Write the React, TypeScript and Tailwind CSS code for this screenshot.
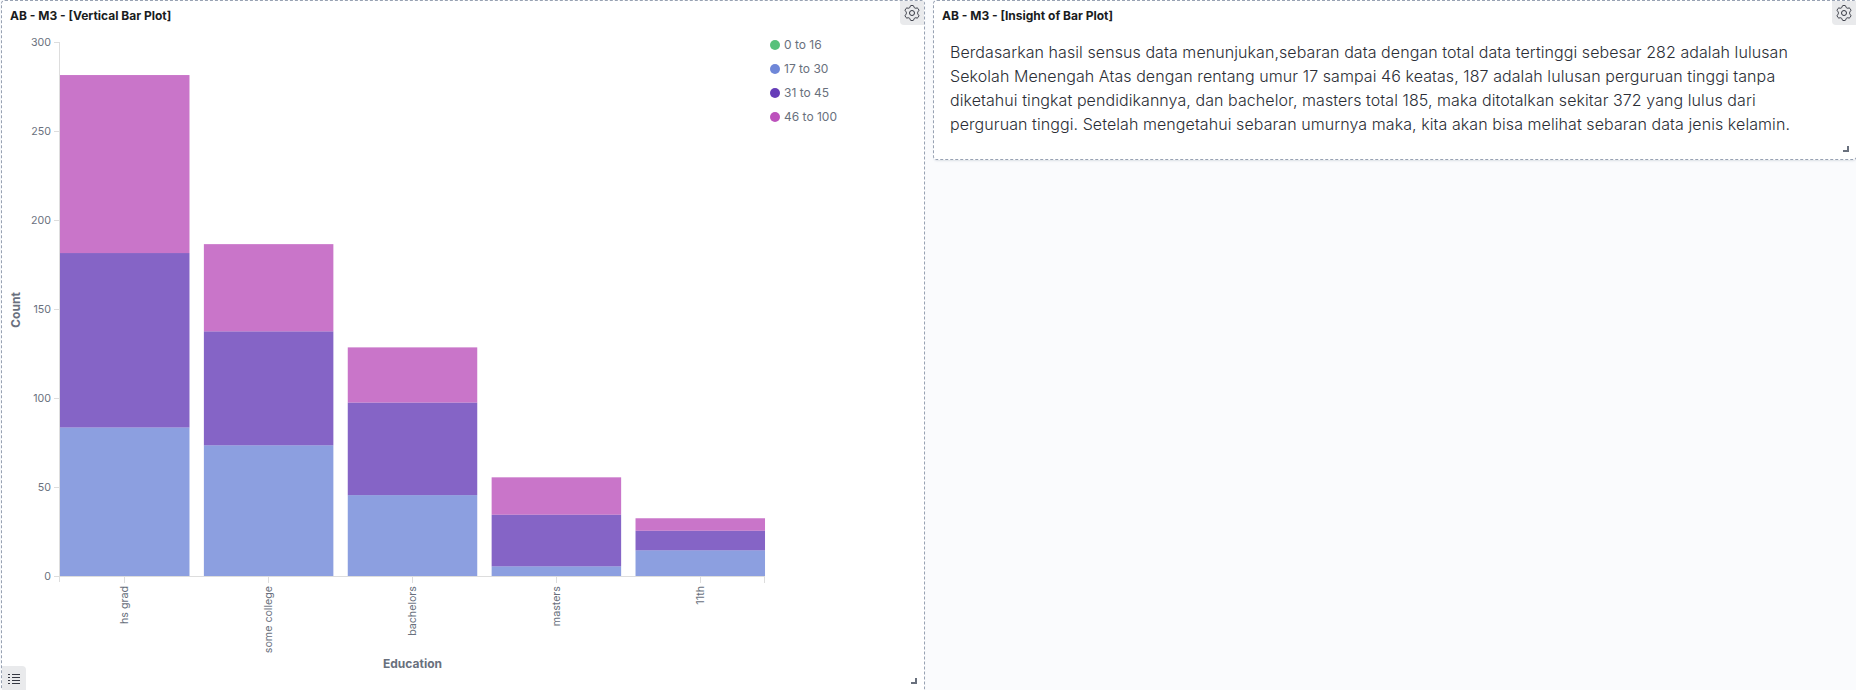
import type { ReactNode } from "react";

const BASE = 577;
const UNIT = 1.78;
const STEP = 143.88;
const BAND = 129.49;

const bars = [
  { label: "hs grad", stops: [0, 84, 182, 282] },
  { label: "some college", stops: [0, 74, 138, 187] },
  { label: "bachelors", stops: [0, 46, 98, 129] },
  { label: "masters", stops: [0, 6, 35, 56] },
  { label: "11th", stops: [0, 15, 26, 33] },
];
const fills = ["#6f87d8", "#663db8", "#bc52bc"];
const ticks = [0, 50, 100, 150, 200, 250, 300];
const legend = [
  { label: "0 to 16", dot: "bg-[#57c17b]" },
  { label: "17 to 30", dot: "bg-[#6f87d8]" },
  { label: "31 to 45", dot: "bg-[#663db8]" },
  { label: "46 to 100", dot: "bg-[#bc52bc]" },
];

function Gear() {
  return (
    <svg width="16" height="16" viewBox="0 0 16 16" fill="none" stroke="#343741">
      <circle cx="8" cy="8" r="2.5" />
      <path
        strokeLinejoin="round"
        d="M6.300 1.200Q6.500.5 7.100.5h1.800q.6 0 .8.700l.3.900q.2.600.8.900t1.200.2l.9-.2q.7-.1 1 .4l.9 1.500q.3.500-.2 1.100l-.6.700q-.4.500-.4 1.300t.4 1.300l.6.700q.5.600.2 1.100l-.9 1.500q-.3.500-1 .4l-.9-.2q-.6-.1-1.200.2t-.8.900l-.3.900q-.2.700-.8.700H7.100q-.6 0-.8-.7l-.3-.9q-.2-.6-.8-.9t-1.200-.2l-.9.2q-.7.1-1-.4l-.9-1.500q-.3-.5.2-1.100l.6-.7Q2.400 8.800 2.400 8T2 6.700L1.400 6q-.5-.6-.2-1.100l.9-1.500q.3-.5 1-.4l.9.200q.6.100 1.200-.2T6 2.100z"
      />
    </svg>
  );
}

function Panel({ title, className, children }: { title: string; className: string; children: ReactNode }) {
  return (
    <section
      className={`relative flex w-[924px] shrink-0 flex-col rounded border border-dashed border-[#98a2b3] bg-white shadow-[0_2px_2px_-1px_rgba(152,162,179,0.3)] ${className}`}
    >
      <header className="flex h-6 shrink-0 items-start justify-between pl-2">
        <h2 className="pt-[6px] text-[12px] leading-[18px] font-bold text-[#1a1c21]">{title}</h2>
        <button className="flex size-6 items-center justify-center rounded-bl bg-[#e9eaec]" aria-label="Panel options">
          <Gear />
        </button>
      </header>
      {children}
      <span className="absolute right-[7px] bottom-[7px] size-[6px] border-r-2 border-b-2 border-[#69707d]" />
    </section>
  );
}

function Chart() {
  return (
    <svg width="768" height="665" viewBox="2 25 768 665" className="shrink-0" fontFamily="Inter, sans-serif" fill="#69707d">
      <g stroke="#ddd" fill="none">
        <path d="M59.500 42V582M54 576.500H765M764.500 576V583" />
        {ticks.map((t) => (
          <path key={t} d={`M54 ${Math.floor(BASE - t * UNIT) - 0.5}H60`} />
        ))}
        {bars.map((b, i) => (
          <path key={b.label} d={`M${Math.floor(60 + i * STEP + BAND / 2) + 0.5} 577V583`} />
        ))}
      </g>
      {bars.map((b, i) =>
        fills.map((f, k) => (
          <rect
            key={b.label + f}
            x={60 + i * STEP}
            width={BAND}
            y={BASE - b.stops[k + 1] * UNIT}
            height={(b.stops[k + 1] - b.stops[k]) * UNIT}
            fill={f}
            opacity="0.8"
          />
        )),
      )}
      <path d="M59 576.500H765" stroke="#ddd" />
      {ticks.map((t) => (
        <text key={t} x="51" y={BASE - t * UNIT + 3.3} textAnchor="end" fontSize="10.67">
          {t}
        </text>
      ))}
      {bars.map((b, i) => (
        <text
          key={b.label}
          transform={`translate(${60 + i * STEP + BAND / 2 + 3.3} 586) rotate(-90)`}
          textAnchor="end"
          fontSize="10.67"
        >
          {b.label}
        </text>
      ))}
      <text x="412.500" y="668" textAnchor="middle" fontSize="12" fontWeight="700">
        Education
      </text>
      <text transform="translate(20 310) rotate(-90)" textAnchor="middle" fontSize="12" fontWeight="700">
        Count
      </text>
    </svg>
  );
}

export default function App() {
  return (
    <main className="flex h-[690px] w-full items-start gap-2 overflow-hidden bg-[#fafbfd] pl-px font-['Inter',sans-serif]">
      <Panel title="AB - M3 - [Vertical Bar Plot]" className="h-[692px]">
        <div className="flex min-h-0 flex-1">
          <Chart />
          <ul className="pt-[8px]">
            {legend.map((l) => (
              <li key={l.label} className="flex h-6 items-center gap-1 text-[12px] text-[#69707d]">
                <span className={`size-[10px] rounded-full ${l.dot}`} />
                {l.label}
              </li>
            ))}
          </ul>
        </div>
        <button
          className="absolute bottom-0 left-0 flex h-[25px] w-6 items-start justify-center rounded-tr bg-[#e9eaec] pt-2"
          aria-label="Toggle legend"
        >
          <svg width="12" height="10" viewBox="0 0 12 10" stroke="#343741">
            <path d="M0 .5h2M4 .5h8M0 3.500h2M4 3.500h8M0 6.500h2M4 6.500h8M0 9.500h2M4 9.500h8" />
          </svg>
        </button>
      </Panel>
      <Panel title="AB - M3 - [Insight of Bar Plot]" className="h-[160px]">
        <p className="pt-[15px] pr-10 pl-4 text-[16px] leading-6 font-light tracking-[0.075px] text-[#2b2e36]">
          Berdasarkan hasil sensus data menunjukan,sebaran data dengan total data tertinggi sebesar 282 adalah lulusan
          Sekolah Menengah Atas dengan rentang umur 17 sampai 46 keatas, 187 adalah lulusan perguruan tinggi tanpa
          diketahui tingkat pendidikannya, dan bachelor, masters total 185, maka ditotalkan sekitar 372 yang lulus dari
          perguruan tinggi. Setelah mengetahui sebaran umurnya maka, kita akan bisa melihat sebaran data jenis kelamin.
        </p>
      </Panel>
    </main>
  );
}
